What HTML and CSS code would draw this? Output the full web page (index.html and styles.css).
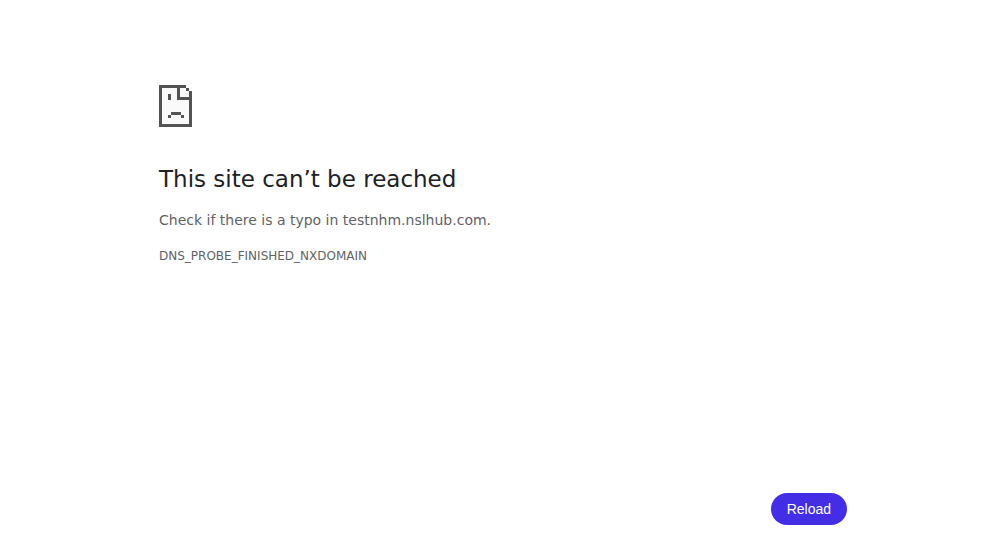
FILE: index.html
```html
<!DOCTYPE html>
<html lang="en">
<head>
<meta charset="utf-8">
<title>testnhm.nslhub.com</title>
<link rel="stylesheet" href="styles.css">
</head>
<body>
<main class="error-page">
  <svg class="icon" viewBox="0 0 33 42" shape-rendering="crispEdges" aria-hidden="true">
    <path d="M0 0H27V3H30V6H33V42H0Z" fill="#fafafa"/>
    <path d="M0 0H27V3H21V12H30V6H33V42H0ZM3 3V39H30V15H18V3ZM9 9H12V15H9ZM27 3H30V6H27ZM12 27H22V30H12ZM9 30H12V33H9ZM22 30H25V33H22Z" fill="#535353" fill-rule="evenodd"/>
  </svg>
  <h1 class="title">This site can’t be reached</h1>
  <p class="summary">Check if there is a typo in testnhm.nslhub.com.</p>
  <p class="code">DNS_PROBE_FINISHED_NXDOMAIN</p>
  <div class="actions"><button class="reload" type="button">Reload</button></div>
</main>
</body>
</html>
```
FILE: styles.css
```css
* { box-sizing: border-box; }
body {
  margin: 0;
  background: #fff;
  color: #5f6368;
  font-family: "DejaVu Sans", sans-serif;
}
.error-page {
  display: flex;
  flex-direction: column;
  min-height: 100vh;
  width: 100%;
  max-width: 736px;
  margin: 0 auto;
  padding: 85px 24px 22px;
}
.icon { display: block; width: 33px; height: 42px; }
.title {
  margin: 38px 0 16px;
  color: #202124;
  font-size: 23px;
  font-weight: 400;
  line-height: 28px;
}
.summary { margin: 0; font-size: 14px; line-height: 22px; }
.code { margin: 16px 0 0; font-size: 12px; line-height: 18px; }
.actions { display: flex; justify-content: flex-end; margin-top: auto; }
.reload {
  height: 32px;
  padding: 0 16px;
  border: 0;
  border-radius: 16px;
  background: #432ee6;
  color: #fff;
  font-family: "Liberation Sans", sans-serif;
  font-size: 14px;
  cursor: pointer;
}
```
